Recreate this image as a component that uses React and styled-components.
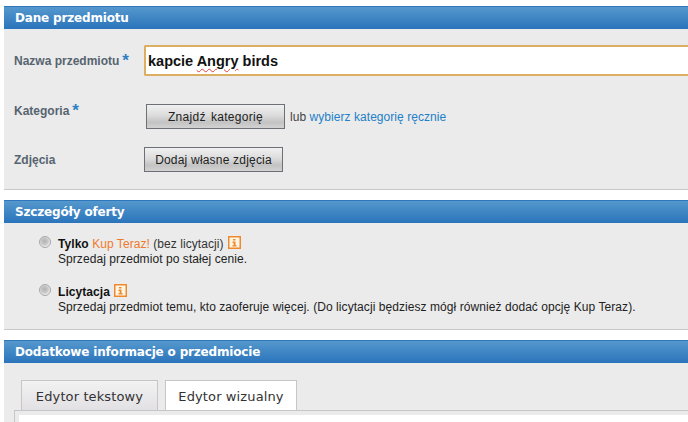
import React from "react";
import styled, { createGlobalStyle } from "styled-components";

const Global = createGlobalStyle`
  html, body { margin: 0; padding: 0; background: #fff; }
  body { font-family: "Liberation Sans", Arial, sans-serif; font-size: 12px; color: #333; }
`;
const Page = styled.div`
  width: 688px; height: 422px; overflow: hidden; box-sizing: border-box;
  padding: 6px 0 0 4px; display: flex; flex-direction: column; gap: 10px;
`;
const Section = styled.section`display: flex; flex-direction: column; flex: ${p => (p.$grow ? 1 : "none")}; min-height: 0;`;
const Header = styled.h2`
  margin: 0; height: 23px; box-sizing: border-box; border-top: 1px solid #2f77bd;
  background: linear-gradient(#5598cd, #2a74bb); color: #fff;
  font: bold 12px/23px "DejaVu Sans", Verdana, sans-serif; letter-spacing: -.17px; padding-left: 11px;
`;
const Panel = styled.div`
  background: #ebebeb; border-bottom: ${p => (p.$open ? "none" : "1px solid #c8c8c8")};
  height: ${p => p.$h}px; box-sizing: border-box; flex: ${p => (p.$open ? 1 : "none")};
  display: flex; flex-direction: column;
`;
const Form = styled(Panel)`padding: 16px 0 0 10px;`;
const Offer = styled(Panel)`padding: 14px 0 0 35px; gap: 18px;`;
const Row = styled.div`
  display: grid; grid-template-columns: 130px 1fr; align-items: ${p => p.$align || "center"};
  margin-top: ${p => p.$mt || 0}px;
`;
const Label = styled.label`font-weight: bold; font-size: 12px; color: #56646f; line-height: 14px;`;
const Star = styled.span`color: #2f7fc4; font-size: 17px; line-height: 10px; margin-left: 3px; font-weight: bold; position: relative; top: 1px;`;
const Input = styled.div`
  height: 31px; box-sizing: border-box; border: 2px solid #dcae62; border-right: none; background: #fff;
  border-radius: 2px 0 0 2px; padding-left: 2px;
  font: bold 14.5px/28px "Liberation Sans", Arial, sans-serif; color: #111;
`;
const Spell = styled.span`text-decoration: underline wavy #e04040 1px; text-underline-offset: 2px;`;
const Controls = styled.div`display: flex; align-items: center; gap: 5px; padding-left: ${p => p.$indent || 0}px; color: #444; letter-spacing: .05px;`;
const Button = styled.button`
  width: 139px; height: 25px; padding: 0; box-sizing: border-box; border: 1px solid #6d7175;
  background: linear-gradient(#f0f0f0 0%, #dcdcdc 45%, #c3c3c3 75%, #d2d2d2 100%);
  color: #222; font: 12px "Liberation Sans", Arial, sans-serif; letter-spacing: ${p => p.$ls || 0.2}px; word-spacing: ${p => p.$ws || 0}px;
`;
const Link = styled.a`color: #2280c8; text-decoration: none;`;
const Option = styled.div`display: grid; grid-template-columns: 15px 1fr; column-gap: 4px; line-height: 15px;`;
const Radio = styled.span`
  width: 12px; height: 12px; border-radius: 50%; margin-top: -1px; box-sizing: border-box;
  border: 1px solid #a4a7a9;
  background: radial-gradient(circle at 45% 42%, #b2b2b2 0, #c6c6c6 40%, #ececec 72%, #fff 100%);
`;
const Title = styled.div`display: flex; align-items: center; gap: 4px; color: #333; height: 15px; white-space: pre; letter-spacing: .06px;`;
const Strong = styled.b`color: #111;`;
const Kup = styled.span`color: #f07a2c;`;
const Desc = styled.div`color: #222; letter-spacing: .065px;`;
const Info = styled.svg`width: 13px; height: 13px; display: block; margin-top: -4px;`;
const Editor = styled(Panel)`padding: 17px 0 0 10px;`;
const Tabs = styled.div`display: flex; gap: 7px; padding-left: 7px;`;
const Tab = styled.div`
  height: 30px; box-sizing: border-box; width: ${p => p.$w}px; border: 1px solid #c6c6c8; border-bottom: none;
  background: ${p => (p.$active ? "#fff" : "linear-gradient(#f2f2f2, #e2e0e4)")};
  text-align: center; font: 13px/31px "DejaVu Sans", Verdana, sans-serif; letter-spacing: .12px; color: #333;
`;
const Frame = styled.div`
  flex: 1; border-top: 1px solid #c6c6c8; border-left: 1px solid #c6c6c8; padding: 4px 0 0 4px; display: flex;
`;
const Paper = styled.div`flex: 1; background: #fff;`;

const InfoIcon = () => (
  <Info viewBox="0 0 13 13">
    <rect x=".75" y=".75" width="11.5" height="11.5" fill="#fff6e8" stroke="#ee8a2c" strokeWidth="1.5" />
    <path d="M5 3h2.5v1.6H5zM4.5 5.6h3v3.6h1.2v1.3H4.4V9.2h1.2V6.9H4.5z" fill="#ee8a2c" />
  </Info>
);

export default function App() {
  return (
    <Page>
      <Global />
      <Section>
        <Header>Dane przedmiotu</Header>
        <Form as="div" $h={161}>
          <Row>
            <Label>Nazwa przedmiotu<Star>*</Star></Label>
            <Input>kapcie <Spell>Angry</Spell> birds</Input>
          </Row>
          <Row $mt={28} $align="start">
            <Label>Kategoria<Star>*</Star></Label>
            <Controls $indent={2}>
              <Button $ws={1.5} $ls={0.3}>Znajdź kategorię</Button>
              <span>lub <Link href="#">wybierz kategorię ręcznie</Link></span>
            </Controls>
          </Row>
          <Row $mt={18}>
            <Label>Zdjęcia</Label>
            <Controls><Button>Dodaj własne zdjęcia</Button></Controls>
          </Row>
        </Form>
      </Section>
      <Section>
        <Header>Szczegóły oferty</Header>
        <Offer $h={107}>
          <Option>
            <Radio />
            <div>
              <Title><span><Strong>Tylko </Strong><Kup>Kup Teraz!</Kup> (bez licytacji)</span><InfoIcon /></Title>
              <Desc>Sprzedaj przedmiot po stałej cenie.</Desc>
            </div>
          </Option>
          <Option>
            <Radio />
            <div>
              <Title><Strong>Licytacja</Strong><InfoIcon /></Title>
              <Desc>Sprzedaj przedmiot temu, kto zaoferuje więcej. (Do licytacji będziesz mógł również dodać opcję Kup Teraz).</Desc>
            </div>
          </Option>
        </Offer>
      </Section>
      <Section $grow>
        <Header>Dodatkowe informacje o przedmiocie</Header>
        <Editor $open>
          <Tabs>
            <Tab $w={137}>Edytor tekstowy</Tab>
            <Tab $w={132} $active>Edytor wizualny</Tab>
          </Tabs>
          <Frame><Paper /></Frame>
        </Editor>
      </Section>
    </Page>
  );
}
